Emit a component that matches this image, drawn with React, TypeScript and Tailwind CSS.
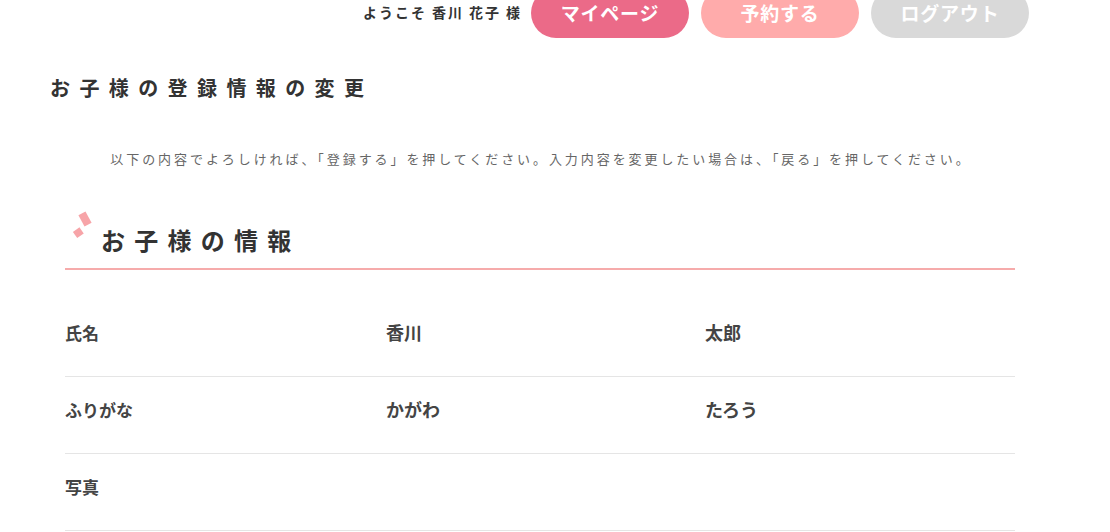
import React from "react";

const rows = [
  { label: "氏名", a: "香川", b: "太郎" },
  { label: "ふりがな", a: "かがわ", b: "たろう" },
  { label: "写真", a: "", b: "" },
];

function Deco() {
  return (
    <svg width="24" height="30" viewBox="0 0 24 30" className="shrink-0 mt-[-11px]">
      <rect x="11" y="3.5" width="8" height="13" fill="#f7a4a8" transform="rotate(-28 15 10)" />
      <rect x="4.3" y="20" width="8" height="7.5" fill="#f7a4a8" transform="rotate(-35 8.3 23.7)" />
    </svg>
  );
}

export default function App() {
  return (
    <div
      className="w-[1110px] h-[532px] overflow-hidden bg-white text-[#333]"
      style={{ fontFamily: '"Noto Sans CJK JP", "Noto Sans", sans-serif' }}
    >
      {/* header */}
      <div className="flex items-center pl-[363px] h-[38px]">
        <span className="w-[157px] text-[14px] font-bold tracking-[0.14em] text-[#333] mt-[-14px] whitespace-nowrap">
          ようこそ 香川 花子 様
        </span>
        <div className="flex gap-3 ml-[11px] mt-[-12px]">
          <button className="w-[158px] h-[50px] rounded-full bg-[#eb6a88] text-white text-[19px] font-bold tracking-[0.04em]">
            マイページ
          </button>
          <button className="w-[158px] h-[50px] rounded-full bg-[#ffabab] text-white text-[19px] font-bold tracking-[0.04em]">
            予約する
          </button>
          <button className="w-[158px] h-[50px] rounded-full bg-[#d9d9d9] text-white text-[19px] font-bold tracking-[0.04em]">
            ログアウト
          </button>
        </div>
      </div>

      {/* page title */}
      <h1 className="pl-[50px] mt-[35px] text-[20px] font-bold tracking-[0.47em] leading-[30px] text-[#333]">
        お子様の登録情報の変更
      </h1>

      <div className="w-[950px] ml-[65px]">
        <p className="mt-[46px] text-center text-[13px] tracking-[0.225em] text-[#666] leading-[20px] mr-[-2px] whitespace-nowrap">
          以下の内容でよろしければ、「登録する」を押してください。入力内容を変更したい場合は、「戻る」を押してください。
        </p>

        {/* section heading */}
        <div className="mt-[51px] flex items-start border-b-2 border-[#f6abab] pb-[8px]">
          <div className="ml-[5px] mr-[7px] flex">
            <Deco />
          </div>
          <h2 className="text-[24px] font-bold tracking-[0.385em] leading-[40px] text-[#333]">
            お子様の情報
          </h2>
        </div>

        <div className="mt-[30px]">
          {rows.map((r) => (
            <div
              key={r.label}
              className="grid grid-cols-[321px_319px_1fr] h-[77px] items-center pb-[11px] border-b border-[#e5e5e5] font-bold text-[#444]"
            >
              <div className="text-[17px]">{r.label}</div>
              <div className="text-[18px]">{r.a}</div>
              <div className="text-[18px]">{r.b}</div>
            </div>
          ))}
        </div>
      </div>
    </div>
  );
}
